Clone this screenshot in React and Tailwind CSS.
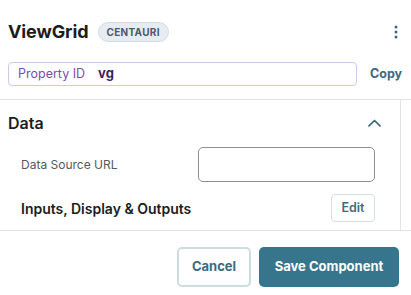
import React from "react";

function Dots() {
  return (
    <svg width="4" height="14" viewBox="0 0 4 14" className="text-[#3b6a80]">
      <circle cx="2" cy="2" r="1.5" fill="currentColor" />
      <circle cx="2" cy="7" r="1.5" fill="currentColor" />
      <circle cx="2" cy="12" r="1.5" fill="currentColor" />
    </svg>
  );
}

function Chevron() {
  return (
    <svg width="13" height="8" viewBox="0 0 13 8" fill="none">
      <path d="M1 6.8L6.5 1.5L12 6.8" stroke="#3b6a80" strokeWidth="1.7" strokeLinecap="round" strokeLinejoin="round" />
    </svg>
  );
}

export default function App() {
  return (
    <div className="w-[411px] h-[295px] bg-white flex flex-col overflow-hidden font-['Inter',_sans-serif]">
      <div className="pl-2 pr-2 pt-[20px] pb-[13px]">
        <div className="flex items-center h-[24px]">
          <span className="text-[18px] font-bold text-[#1c1c1e] tracking-[-0.1px] leading-none">ViewGrid</span>
          <span className="ml-[9px] h-[20px] px-[8px] flex items-center rounded-full bg-[#e7ecf3] border border-[#d3dbe6] text-[10px] font-bold tracking-[0.3px] text-[#4b5a6e]">
            CENTAURI
          </span>
          <span className="ml-auto mr-[5px] flex items-center"><Dots /></span>
        </div>
        <div className="mt-[18px] flex items-center">
          <div className="w-[349px] h-[24px] border border-[#d6c4ea] rounded-[4px] flex items-center pl-[9px] text-[12.5px]">
            <span className="text-[#7a4ea8]">Property ID</span>
            <span className="ml-[13px] font-bold text-[13px] text-[#3d1f62]">vg</span>
          </div>
          <span className="ml-[13px] text-[12.5px] font-bold text-[#3b6a80]">Copy</span>
        </div>
      </div>
      <div className="flex h-[132px] border-t border-b border-[#e3e3e3]">
        <div className="flex-1 pl-2 pr-[25px] pt-[11px]">
          <div className="flex items-center justify-between h-[24px]">
            <span className="text-[16px] font-semibold text-[#1c1c1e]">Data</span>
            <span className="mr-[-6px] flex items-center"><Chevron /></span>
          </div>
          <div className="mt-[12px] flex items-center pl-[13px] h-[35px]">
            <span className="text-[12px] text-[#555a60]">Data Source URL</span>
            <div className="ml-auto w-[177px] h-[35px] border border-[#8f8f8f] rounded-[5px]" />
          </div>
          <div className="mt-[12px] flex items-center pl-[13px] h-[28px]">
            <span className="text-[14px] font-semibold text-[#1c1c1e]">Inputs, Display &amp; Outputs</span>
            <div className="ml-auto w-[44px] h-[28px] border border-[#d9dee3] rounded-[4px] flex items-center justify-center text-[12.5px] font-semibold text-[#3b6a80]">
              Edit
            </div>
          </div>
        </div>
        <div className="w-[11px] border-l border-[#e3e3e3]" />
      </div>
      <div className="flex justify-end pr-[12px] pt-[16px] gap-[8px]">
        <div className="w-[74px] h-[40px] border-2 border-[#cddbe3] rounded-[5px] flex items-center justify-center text-[13px] font-bold text-[#3b6a80]">
          Cancel
        </div>
        <div className="w-[140px] h-[40px] bg-[#37758c] rounded-[5px] flex items-center justify-center text-[13px] font-bold text-white">
          Save Component
        </div>
      </div>
    </div>
  );
}
